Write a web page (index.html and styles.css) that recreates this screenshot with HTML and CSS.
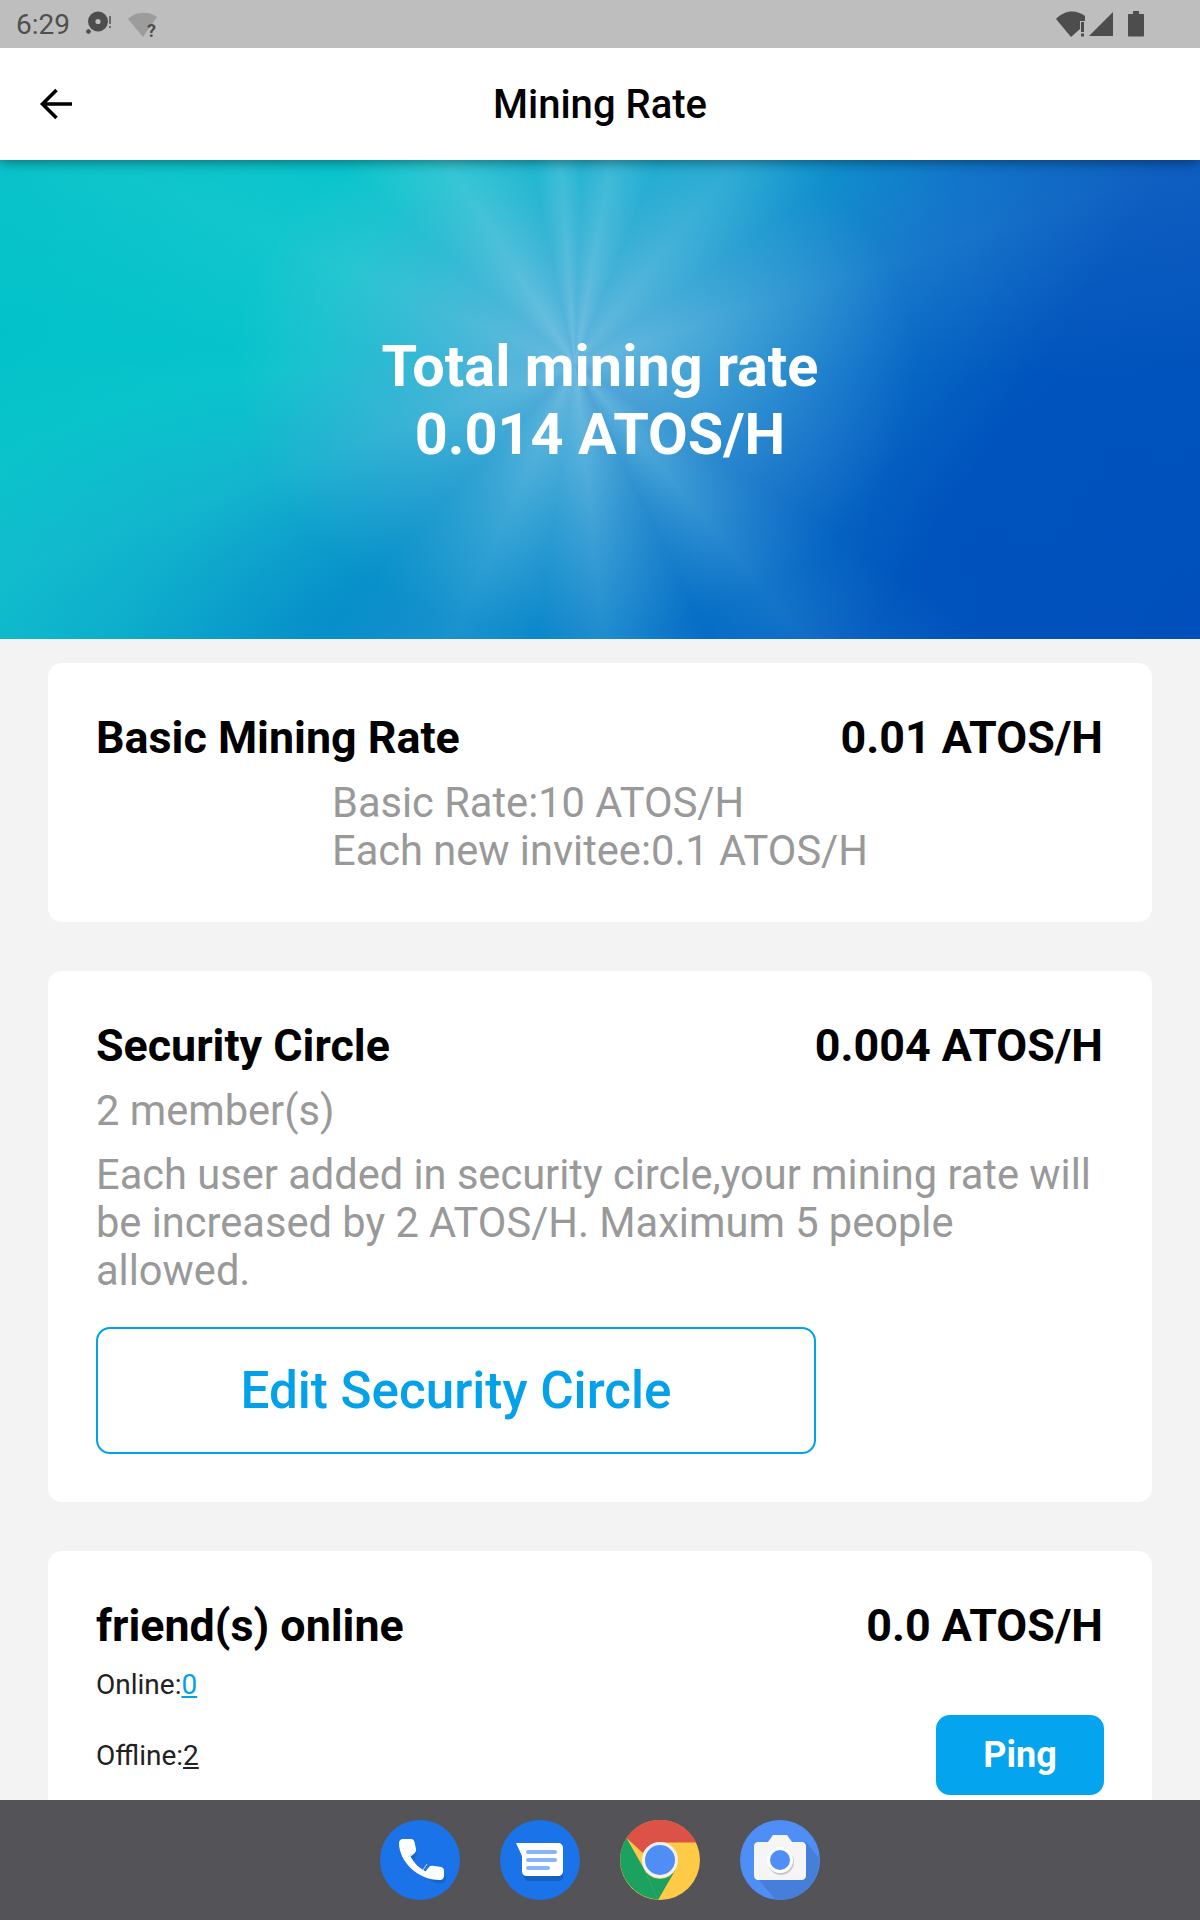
FILE: index.html
```html
<html>
<head>
	<title>Mining Rate</title>
	<meta charset="UTF-8">
	<meta name="viewport" content="width=device-width, initial-scale=1.0"/>
	<link rel="stylesheet" href="styles.css">
</head>
<body>
	<div class="phone">
		<div class="status">
			<div class="status-left">
				<span class="clock">6:29</span>
				<svg class="ico-disc" width="28" height="26" viewBox="0 0 28 26">
					<circle cx="13" cy="10.500" r="10" fill="#4d4d4d"/>
					<circle cx="13" cy="10.500" r="2.600" fill="#bebebe"/>
					<circle cx="3.500" cy="20.500" r="2.800" fill="#4d4d4d" stroke="#bebebe" stroke-width="1"/>
					<rect x="24" y="5" width="2" height="8" fill="#6a6a6a"/>
					<rect x="24" y="15" width="2" height="2" fill="#6a6a6a"/>
				</svg>
				<svg class="ico-wifi-q" width="30" height="34" viewBox="0 0 30 34">
					<path d="M0 12C8 4 21 4 29 10L15 30Z" fill="#9c9c9c"/>
					<text x="19" y="30" class="q">?</text>
				</svg>
			</div>
			<div class="status-right">
				<svg width="30" height="26" viewBox="0 0 30 26">
					<path d="M0 8C8 -1 20 -2 29 5V10H24V18L15 26Z" fill="#4d4d4d"/>
					<rect x="25" y="11" width="3" height="10" fill="#4d4d4d"/>
					<rect x="25" y="22.500" width="3" height="3" fill="#4d4d4d"/>
				</svg>
				<svg class="ico-signal" width="24" height="26" viewBox="0 0 24 26">
					<path d="M24 1V25H0Z" fill="#4d4d4d"/>
				</svg>
				<svg class="ico-batt" width="16" height="26" viewBox="0 0 16 26">
					<path d="M5 0H11V3H15C15.600 3 16 3.400 16 4V24.500C16 25.100 15.600 25.500 15 25.500H1C.4 25.500 0 25.100 0 24.500V4C0 3.400 .4 3 1 3H5Z" fill="#4d4d4d"/>
				</svg>
			</div>
		</div>

		<div class="topbar">
			<svg class="back" width="32" height="32" viewBox="0 0 32 32">
				<path d="M32 16H3M16.500 2L2.500 16L16.500 30" fill="none" stroke="#000" stroke-width="3.600"/>
			</svg>
			<div class="topbar-title">Mining Rate</div>
		</div>

		<div class="content">
			<div class="hero">
				<div class="hero-text">Total mining rate</div>
				<div class="hero-text">0.014 ATOS/H</div>
			</div>

			<div class="list">
				<div class="card">
					<div class="row">
						<span>Basic Mining Rate</span>
						<span>0.01 ATOS/H</span>
					</div>
					<div class="rate-note">
						Basic Rate:10 ATOS/H<br/>
						Each new invitee:0.1 ATOS/H
					</div>
				</div>

				<div class="card">
					<div class="row">
						<span>Security Circle</span>
						<span>0.004 ATOS/H</span>
					</div>
					<div class="members">2 member(s)</div>
					<div class="desc">Each user added in security circle,your mining rate will be increased by 2 ATOS/H. Maximum 5 people allowed.</div>
					<div class="edit-btn">Edit Security Circle</div>
				</div>

				<div class="card">
					<div class="row">
						<span>friend(s) online</span>
						<span>0.0 ATOS/H</span>
					</div>
					<div class="small online">Online:<u class="blue">0</u></div>
					<div class="offline-row">
						<div class="small">Offline:<u>2</u></div>
						<div class="ping">Ping</div>
					</div>
				</div>
			</div>
		</div>

		<div class="dock">
			<svg class="app" viewBox="0 0 80 80">
				<circle cx="40" cy="40" r="40" fill="#1a73e8"/>
				<path d="M24 27C27 42 37 52 55 60C63 62 66 58 65 53L56 50L49 54C42 50 36 44 33 37L36 31L33 21L24 20C20 20 19 25 24 27Z" fill="#1558b0" opacity=".55" transform="translate(1 3)"/>
				<path d="M23 19H31C33 19 34 20 34.500 22L36 29C36.300 31 35.500 32.500 34 34L30.500 36.500C34 43 39 48 45.500 51.500L49 47C50 46 51.500 45.500 53 45.800L61 47C63 47.500 64 49 64 51V56C64 58.500 62 60 60 60C37 60 19 41 19 23C19 21 20.500 19 23 19Z" fill="#fff"/>
				<path d="M28 37L34 33M43 50L47 44" stroke="#dcdcdc" stroke-width="1"/>
			</svg>
			<svg class="app" viewBox="0 0 80 80">
				<circle cx="40" cy="40" r="40" fill="#1a73e8"/>
				<path d="M22 27H58C60 27 62 29 62 31V53C62 56 60 58 58 58H28C25 58 23 56 23 53L22 27Z" fill="#1558b0" opacity=".7" transform="translate(1 3)"/>
				<path d="M16 23H58C61 23 63 25 63 28V51C63 54 61 56 58 56H27C24 56 22 54 22 51V36Z" fill="#fff"/>
				<rect x="26" y="30" width="31" height="4" rx="2" fill="#8ab4f8"/>
				<rect x="26" y="38" width="31" height="4" rx="2" fill="#8ab4f8"/>
				<rect x="26" y="46" width="24" height="4" rx="2" fill="#8ab4f8"/>
			</svg>
			<svg class="app" viewBox="0 0 80 80">
				<circle cx="40" cy="40" r="40" fill="#ffca45"/>
				<path d="M6.500 18A40 40 0 0 1 76 22.500H40A18 18 0 0 0 23 33Z" fill="#dc5246"/>
				<path d="M6.500 18L23 47L38 79.500A40 40 0 0 1 6.500 18Z" fill="#1ba261"/>
				<path d="M23 47A18 18 0 0 0 56 49L38 80Z" fill="#1ba261"/>
				<circle cx="40" cy="40" r="18" fill="#f1f1f1"/>
				<circle cx="40" cy="40" r="15" fill="#4f8ef5"/>
			</svg>
			<svg class="app" viewBox="0 0 80 80">
				<circle cx="40" cy="40" r="40" fill="#4f8ef5"/>
				<path d="M66 22L79 38A40 40 0 0 1 36 80L18 59Z" fill="#467fd9"/>
				<path d="M18 22H28L33 15H47L52 22H62C64 22 66 24 66 26V56C66 58 64 60 62 60H18C16 60 14 58 14 56V26C14 24 16 22 18 22Z" fill="#f5f5f5"/>
				<circle cx="41" cy="42" r="13" fill="#c9c9c9"/>
				<circle cx="40" cy="40" r="13" fill="#fff"/>
				<circle cx="40" cy="40" r="10" fill="#4f8ef5"/>
			</svg>
		</div>
	</div>
</body>
</html>
```

FILE: styles.css
```css
* {
	margin: 0;
	padding: 0;
	box-sizing: border-box;
}
body {
	font-family: Roboto, "Liberation Sans", sans-serif;
	background: #f3f3f3;
}
.phone {
	width: 1200px;
	height: 1920px;
	display: flex;
	flex-direction: column;
	overflow: hidden;
}

/* status bar */
.status {
	height: 48px;
	flex: none;
	background: #bebebe;
	padding: 0 56px 0 16px;
	display: flex;
	align-items: center;
	justify-content: space-between;
	position: relative;
	z-index: 2;
}
.status-left {
	display: flex;
	align-items: center;
}
.clock {
	font-size: 28px;
	color: #4f4f4f;
	width: 69px;
}
.ico-wifi-q {
	margin-left: 15px;
}
.q {
	font-size: 18px;
	font-weight: 700;
	fill: #4d4d4d;
}
.status-right {
	display: flex;
	align-items: center;
	gap: 3px;
}
.ico-batt {
	margin-left: 12px;
}

/* title bar */
.topbar {
	height: 112px;
	flex: none;
	background: #fff;
	display: flex;
	align-items: center;
	justify-content: center;
	position: relative;
	box-shadow: 0 2px 12px rgba(0,0,0,.45);
	z-index: 1;
}
.back {
	position: absolute;
	left: 40px;
	top: 40px;
}
.topbar-title {
	font-size: 40px;
	font-weight: 500;
	color: #000;
}

.content {
	flex: 1;
	overflow: hidden;
}

/* blue banner */
.hero {
	height: 479px;
	padding-top: 2px;
	position: relative;
	display: flex;
	flex-direction: column;
	align-items: center;
	justify-content: center;
	color: #fff;
	font-size: 57.6px;
	font-weight: 700;
	line-height: 68px;
	background:
		radial-gradient(ellipse 340px 270px at 575px 205px, rgba(125,185,225,.75), rgba(125,185,225,.3) 55%, rgba(125,185,225,0) 100%),
		radial-gradient(ellipse 560px 280px at 430px 479px, rgba(0,125,200,.7), rgba(0,125,200,0) 100%),
		linear-gradient(122deg, #00c1c8 0%, #08c4cc 28%, #14a2d0 50%, #0a70c8 65%, #0054bd 78%, #0050bc 100%);
}
.hero::before {
	content: "";
	position: absolute;
	top: 0;
	right: 0;
	bottom: 0;
	left: 0;
	background: conic-gradient(from -12deg at 575px 205px,
		rgba(255,255,255,0) 0deg, rgba(255,255,255,.12) 8deg, rgba(255,255,255,.02) 14deg, rgba(255,255,255,.12) 22deg, rgba(255,255,255,0) 34deg,
		rgba(255,255,255,.07) 50deg, rgba(255,255,255,0) 66deg, rgba(255,255,255,.06) 84deg, rgba(255,255,255,0) 104deg,
		rgba(0,60,180,.1) 135deg, rgba(255,255,255,.06) 152deg, rgba(0,60,180,.1) 166deg, rgba(255,255,255,.1) 186deg, rgba(255,255,255,.02) 200deg, rgba(255,255,255,.08) 216deg, rgba(0,110,190,.1) 236deg,
		rgba(255,255,255,.05) 262deg, rgba(255,255,255,0) 285deg, rgba(255,255,255,.05) 305deg, rgba(255,255,255,.01) 322deg, rgba(255,255,255,.12) 340deg, rgba(255,255,255,0) 360deg);
}
.hero-text {
	position: relative;
}

/* cards */
.list {
	padding: 24px 48px 0;
	display: flex;
	flex-direction: column;
	gap: 49px;
}
.card {
	background: #fff;
	border-radius: 14px;
	padding: 48px;
}
.row {
	display: flex;
	justify-content: space-between;
	padding-right: 1px;
	font-size: 44.8px;
	font-weight: 700;
	line-height: 54px;
	color: #000;
}
.rate-note {
	margin: 14px 0 -1px 236px;
	font-size: 41.6px;
	line-height: 48px;
	color: #999;
}
.members {
	margin-top: 14px;
	font-size: 41.6px;
	line-height: 48px;
	color: #999;
}
.desc {
	margin-top: 16px;
	font-size: 41.6px;
	line-height: 48px;
	color: #999;
}
.edit-btn {
	margin-top: 32px;
	width: 720px;
	height: 127px;
	border: 2px solid #04a1eb;
	border-radius: 14px;
	display: flex;
	align-items: center;
	justify-content: center;
	color: #04a1eb;
	font-size: 51.2px;
	font-weight: 500;
}
.small {
	font-size: 28px;
	color: #222;
}
.online {
	margin-top: 15px;
}
.blue {
	color: #04a1eb;
}
.offline-row {
	margin-top: 14px;
	display: flex;
	justify-content: space-between;
	align-items: center;
}
.ping {
	width: 168px;
	height: 80px;
	background: #04a5ee;
	border-radius: 14px;
	color: #fff;
	font-size: 36px;
	font-weight: 700;
	display: flex;
	align-items: center;
	justify-content: center;
}

/* home screen dock */
.dock {
	height: 120px;
	flex: none;
	background: #545358;
	display: flex;
	justify-content: center;
	align-items: flex-start;
	gap: 40px;
	padding-top: 20px;
}
.app {
	width: 80px;
	height: 80px;
}
```
